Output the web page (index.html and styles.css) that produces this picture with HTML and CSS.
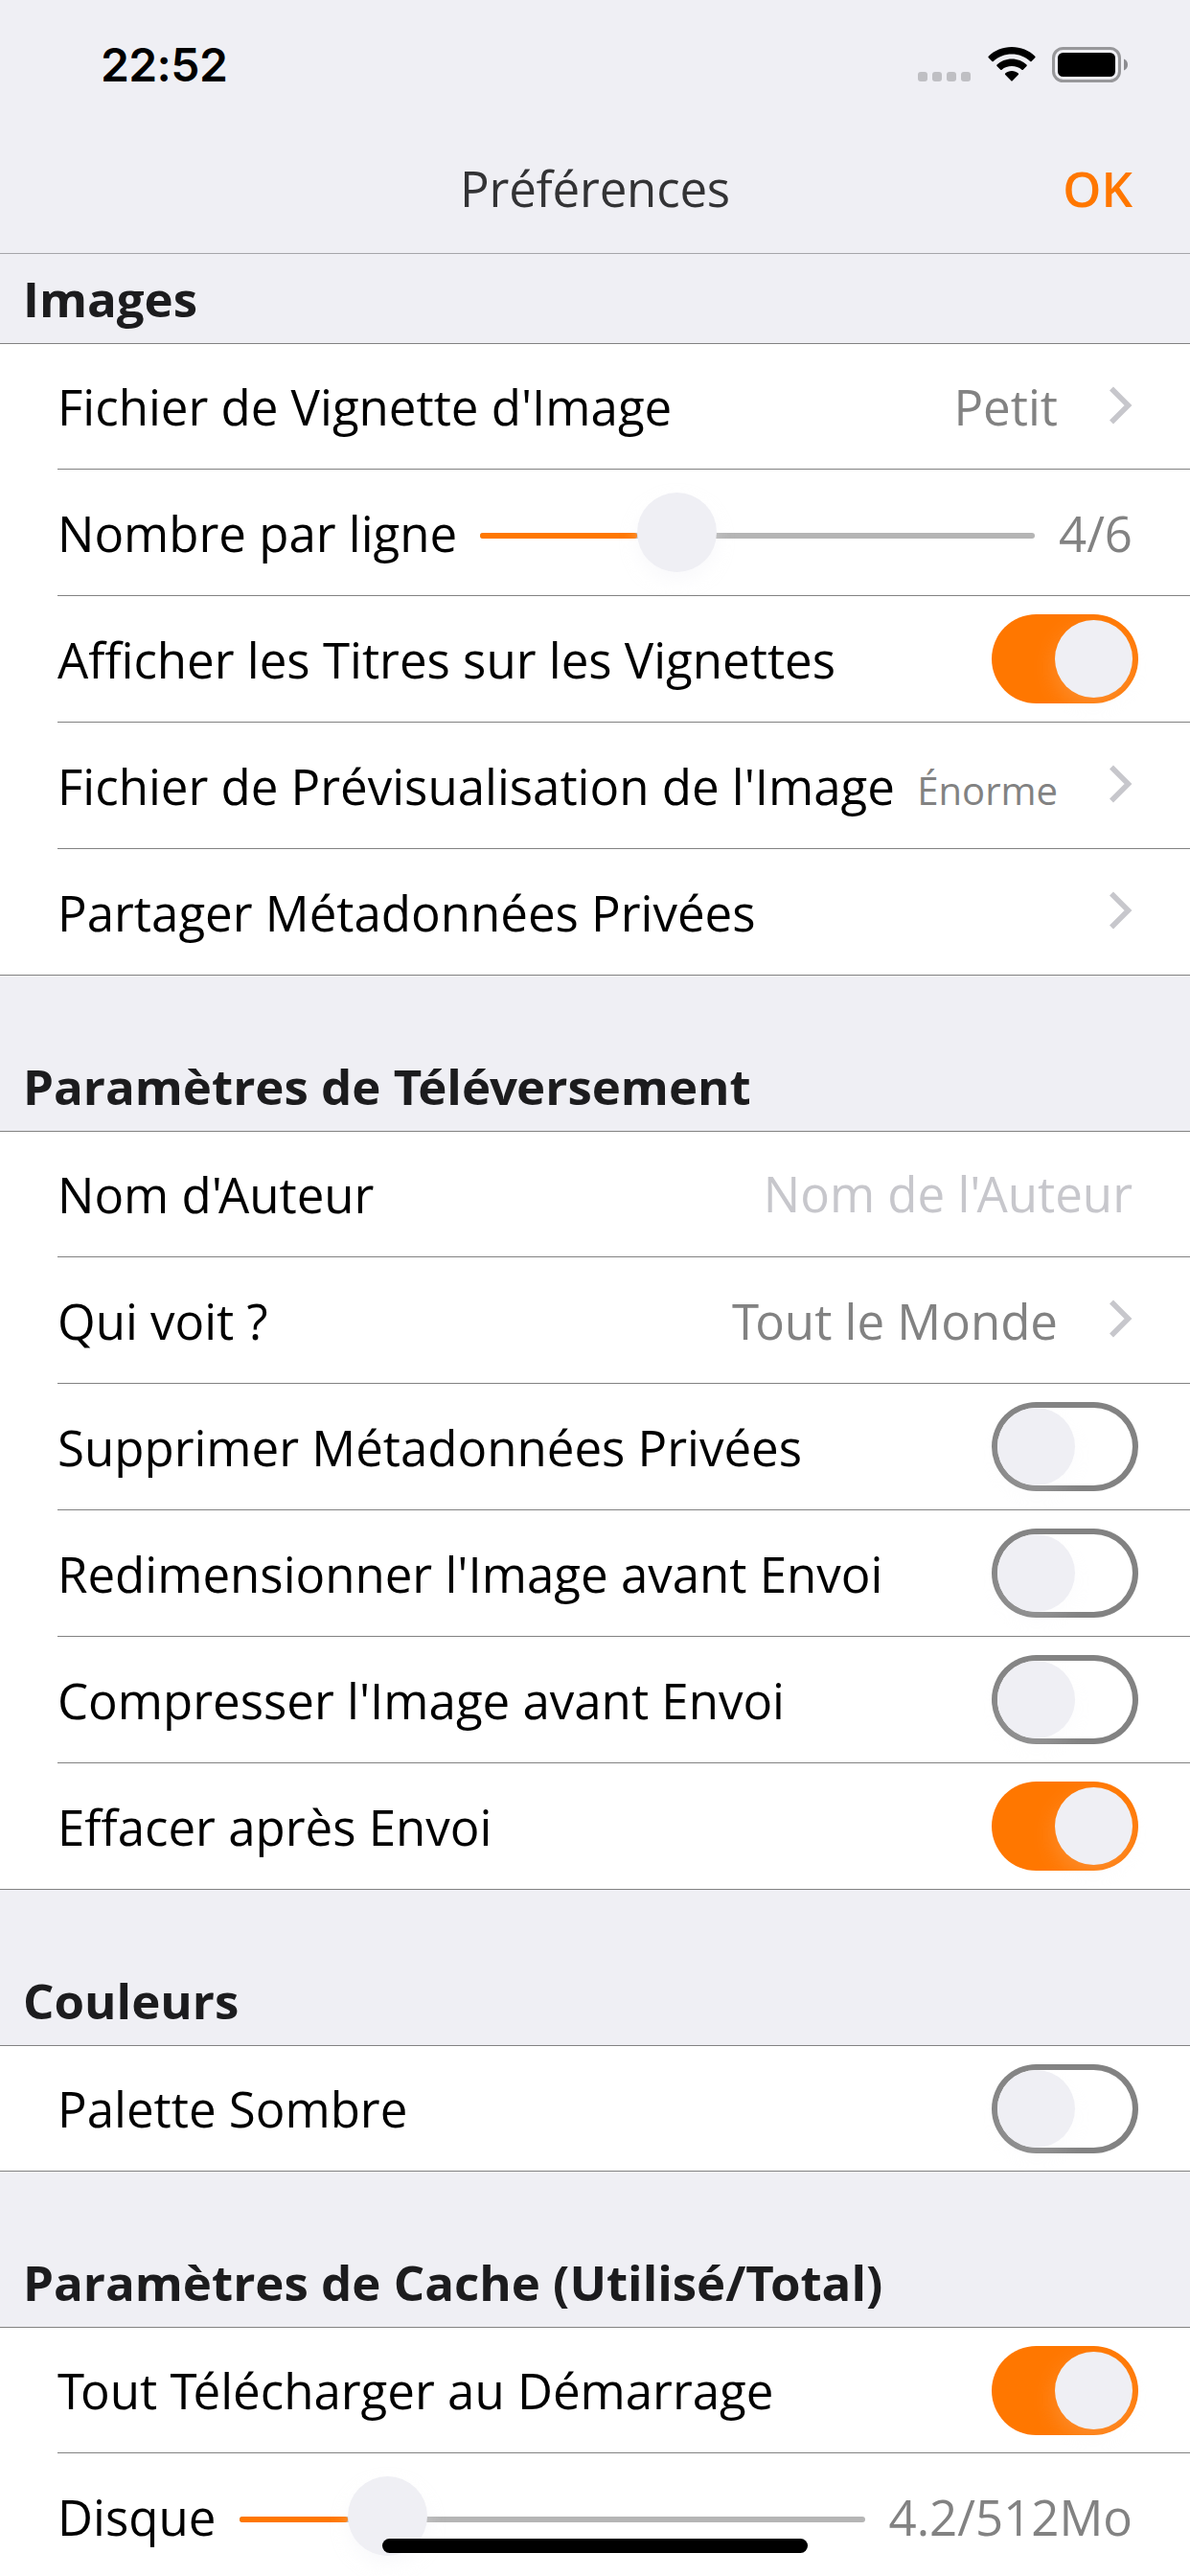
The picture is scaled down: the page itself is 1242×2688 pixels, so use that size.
FILE: index.html
```html
<!DOCTYPE html>
<html lang="fr">
<head>
<meta charset="utf-8">
<title>Préférences</title>
<link rel="stylesheet" href="styles.css">
</head>
<body>
<svg class="defs" width="0" height="0" aria-hidden="true">
  <symbol id="chevron" viewBox="0 0 24 40"><path d="M2 2.500 19.500 20 2 37.500" fill="none" stroke="#c7c7cc" stroke-width="5.600"/></symbol>
</svg>
<div class="screen">
  <header class="top">
    <div class="status">
      <span class="time">22:52</span>
      <div class="status-icons">
        <div class="dots"><i></i><i></i><i></i><i></i></div>
        <svg class="wifi" width="50" height="37" viewBox="0 0 50 37">
          <path d="M25 0C34.500 0 43 3.600 49.300 9.700Q50 10.400 49.300 11.200L45.600 14.900Q44.900 15.600 44.200 14.900C39 10.100 32.300 7.500 25 7.500S11 10.100 5.800 14.900Q5.100 15.600 4.400 14.900L.7 11.200Q0 10.400 .7 9.700C7 3.600 15.500 0 25 0Z"/>
          <path d="M25 12.600C31 12.600 36.400 14.900 40.500 18.600Q41.200 19.300 40.500 20L36.800 23.700Q36.100 24.400 35.400 23.800C32.600 21.400 29 20.100 25 20.100S17.400 21.400 14.600 23.800Q13.900 24.400 13.200 23.700L9.500 20Q8.800 19.300 9.500 18.600C13.600 14.900 19 12.600 25 12.600Z"/>
          <path d="M25 25C27.600 25 30 26 31.800 27.500Q32.500 28.200 31.800 28.900L25.700 35.300Q25 36 24.300 35.300L18.200 28.900Q17.500 28.200 18.200 27.500C20 26 22.400 25 25 25Z"/>
        </svg>
        <svg class="battery" width="80" height="37" viewBox="0 0 80 37">
          <rect x="1.500" y="1.500" width="69" height="34" rx="10" fill="none" stroke="#97979a" stroke-width="3"/>
          <rect x="6" y="6" width="60" height="25" rx="5.500"/>
          <path d="M75 12.500C77.500 13.500 79 15.800 79 18.500S77.500 23.500 75 24.500Z" fill="#8c8c90"/>
        </svg>
      </div>
    </div>
    <nav class="navbar">
      <h1>Préférences</h1>
      <a class="ok">OK</a>
    </nav>
  </header>

  <main>
    <h2 class="first">Images</h2>
    <section class="group">
      <div class="row"><span class="label">Fichier de Vignette d'Image</span><span class="value">Petit</span><svg class="chev"><use href="#chevron"/></svg></div>
      <div class="row"><span class="label">Nombre par ligne</span><div class="slider s1"><b class="fill"></b><b class="thumb"></b></div><span class="value">4/6</span></div>
      <div class="row"><span class="label">Afficher les Titres sur les Vignettes</span><div class="switch on"><b></b></div></div>
      <div class="row"><span class="label">Fichier de Prévisualisation de l'Image</span><span class="value small">Énorme</span><svg class="chev"><use href="#chevron"/></svg></div>
      <div class="row"><span class="label">Partager Métadonnées Privées</span><svg class="chev"><use href="#chevron"/></svg></div>
    </section>

    <h2>Paramètres de <span class="kern">T</span>él<span class="kern-s">év</span>ersement</h2>
    <section class="group">
      <div class="row"><span class="label">Nom d<span class="kern">'</span>Auteur</span><span class="value placeholder">Nom de l<span class="kern">'</span>Auteur</span></div>
      <div class="row"><span class="label">Qui voit ?</span><span class="value"><span class="kern">T</span>out le Monde</span><svg class="chev"><use href="#chevron"/></svg></div>
      <div class="row"><span class="label">Supprimer Métadonnées Privées</span><div class="switch"><b></b></div></div>
      <div class="row"><span class="label">Redimensionner l'Image avant Envoi</span><div class="switch"><b></b></div></div>
      <div class="row"><span class="label">Compresser l'Image avant Envoi</span><div class="switch"><b></b></div></div>
      <div class="row"><span class="label">Effacer après Envoi</span><div class="switch on"><b></b></div></div>
    </section>

    <h2>Couleurs</h2>
    <section class="group">
      <div class="row"><span class="label">Palette Sombre</span><div class="switch"><b></b></div></div>
    </section>

    <h2>Paramètres de Cache (Utilisé/<span class="kern">T</span>otal)</h2>
    <section class="group">
      <div class="row"><span class="label"><span class="kern">T</span>out <span class="kern">T</span>élécharger au Démarrage</span><div class="switch on"><b></b></div></div>
      <div class="row"><span class="label">Disque</span><div class="slider s2"><b class="fill"></b><b class="thumb"></b></div><span class="value">4.2/512Mo</span></div>
    </section>
  </main>
  <div class="home"></div>
</div>
</body>
</html>
```
FILE: styles.css
```css
* { box-sizing: border-box; }

body {
  margin: 0;
  background: #efeff4;
  font-family: "Open Sans", "Noto Sans", sans-serif;
  font-size: 51px;
  line-height: 70px;
  color: #000;
}

.defs { position: absolute; }

/* tightened letter pairs */
.kern { letter-spacing: -4px; }
.kern-s { letter-spacing: -1px; }

.screen {
  position: relative;
  width: 1242px;
  height: 2688px;
  overflow: hidden;
}

.top {
  height: 265px;
  border-bottom: 1px solid #a5a5a9;
}

.status {
  height: 132px;
  padding: 0 64px 0 105px;
  display: flex;
  justify-content: space-between;
}

.time {
  padding-top: 33px;
  font-family: Inter, sans-serif;
  font-weight: 600;
  font-size: 48px;
  letter-spacing: -0.6px;
}

.status-icons {
  display: flex;
  padding-top: 49px;
}

.dots {
  display: flex;
  gap: 5px;
  padding-top: 26px;
  margin-right: 18px;
}

.dots i {
  width: 10px;
  height: 10px;
  border-radius: 3px;
  background: #bfbfc3;
}

.wifi { margin-right: 17px; }

.navbar {
  height: 132px;
  padding: 29px 60px 0;
  display: grid;
  grid-template-columns: 1fr auto 1fr;
}

h1 {
  grid-column: 2;
  margin: 0;
  font-size: 51px;
  font-weight: 400;
  letter-spacing: -0.2px;
  color: #333335;
}

.ok {
  justify-self: end;
  font-weight: 600;
  color: #ff7700;
}

h2 {
  height: 162px;
  margin: 0;
  padding: 80px 24px 0;
  font-size: 51px;
  font-weight: 700;
  color: #1c1c1e;
}

h2.first {
  height: 93px;
  padding-top: 11px;
}

.group {
  background: #fff;
  border-top: 1px solid #828282;
  border-bottom: 1px solid #828282;
}

.row {
  display: flex;
  align-items: center;
  height: 132px;
  margin-left: 60px;
  padding-right: 60px;
  border-bottom: 1px solid #828282;
  white-space: nowrap;
}

.row:first-child { height: 131px; }
.row:last-child { height: 131px; border-bottom: 0; }
.row:only-child { height: 130px; }

.label { margin-right: auto; }
.value { color: #828282; }
.placeholder { color: #c7c7cc; margin-top: -2px; }
.small { font-size: 40px; padding-top: 10px; }

.chev {
  width: 24px;
  height: 40px;
  margin: 0 0 3px 54px;
  flex: none;
}

.switch {
  width: 153px;
  height: 93px;
  margin-right: -6px;
  padding: 6px;
  border-radius: 47px;
  box-shadow: inset 0 0 0 6px #828282;
}

.switch b {
  display: block;
  width: 81px;
  height: 81px;
  border-radius: 50%;
  background: #efeff4;
  box-shadow: 0 9px 24px rgba(239, 239, 244, .2);
}

.switch.on {
  background: #ff7700;
  box-shadow: none;
}

.switch.on b { margin-left: 60px; }

.slider {
  display: flex;
  align-items: center;
  height: 6px;
  margin: 7px 25px 0 0;
  border-radius: 3px;
  background: #b5b5b5;
}

.slider .fill {
  height: 6px;
  border-radius: 3px;
  background: #ff7700;
}

.slider .thumb {
  flex: none;
  width: 83px;
  height: 83px;
  margin-top: -7px;
  border-radius: 50%;
  background: #efeff4;
  box-shadow: 0 9px 18px rgba(239, 239, 244, .35);
}

.s1 { width: 579px; }
.s1 .fill { width: 164px; }
.s2 { width: 653px; }
.s2 .fill { width: 113px; }

.home {
  position: absolute;
  left: 399px;
  top: 2649px;
  width: 444px;
  height: 15px;
  border-radius: 8px;
  background: #000;
}
```
